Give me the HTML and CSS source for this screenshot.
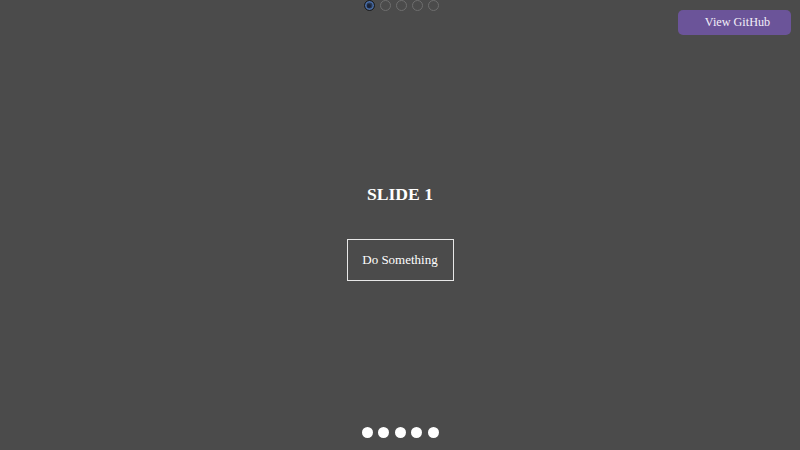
FILE: index.html
```html
<!DOCTYPE html>
<html>
<head>
<meta charset="utf-8">
<link rel="stylesheet" href="styles.css">
</head>
<body>
<div class="page">
  <div class="radios">
    <span class="radio checked"></span>
    <span class="radio"></span>
    <span class="radio"></span>
    <span class="radio"></span>
    <span class="radio"></span>
  </div>
  <a class="github">View GitHub</a>
  <main class="slide">
    <h1 class="title">SLIDE 1</h1>
    <button class="action">Do Something</button>
  </main>
  <div class="dots">
    <span class="dot"></span>
    <span class="dot"></span>
    <span class="dot"></span>
    <span class="dot"></span>
    <span class="dot"></span>
  </div>
</div>
</body>
</html>
```
FILE: styles.css
```css
html, body {
  margin: 0;
  padding: 0;
  width: 800px;
  height: 450px;
  overflow: hidden;
  background: #4b4b4b;
  font-family: "Liberation Serif", "Times New Roman", serif;
  color: #fff;
}
.page {
  position: relative;
  width: 800px;
  height: 450px;
  display: flex;
  flex-direction: column;
  align-items: center;
}
.radios {
  display: flex;
  gap: 5px;
  margin-left: 2px;
}
.radio {
  width: 9px;
  height: 9px;
  border: 1px solid #6e6e6e;
  border-radius: 50%;
  box-sizing: content-box;
}
.radio.checked {
  background: #2a3a55;
  border-color: #1c1c1c;
  box-shadow: inset 0 0 0 1.5px #4a6ea8;
  position: relative;
}
.radio.checked::after {
  content: "";
  position: absolute;
  left: 2.5px;
  top: 2.5px;
  width: 4px;
  height: 4px;
  border-radius: 50%;
  background: #1a2235;
}
.github {
  position: absolute;
  top: 10px;
  right: 9px;
  width: 113px;
  height: 25px;
  box-sizing: border-box;
  padding-left: 6px;
  background: #6b5499;
  border-radius: 5px;
  color: #f2eef8;
  font-size: 12.2px;
  display: flex;
  align-items: center;
  justify-content: center;
}
.slide {
  flex: 1;
  display: flex;
  flex-direction: column;
  align-items: center;
  padding-top: 160px;
}
.title {
  margin: 0;
  font-size: 17.6px;
  font-weight: bold;
  line-height: 46px;
}
.action {
  margin-top: 22px;
  width: 107px;
  height: 42px;
  background: transparent;
  border: 1px solid #e8e8e8;
  color: #fff;
  font-family: "Liberation Serif", "Times New Roman", serif;
  font-size: 13px;
  padding: 0;
}
.dots {
  display: flex;
  gap: 5.5px;
  padding-bottom: 12px;
}
.dot {
  width: 11px;
  height: 11px;
  border-radius: 50%;
  background: #fff;
}
```
